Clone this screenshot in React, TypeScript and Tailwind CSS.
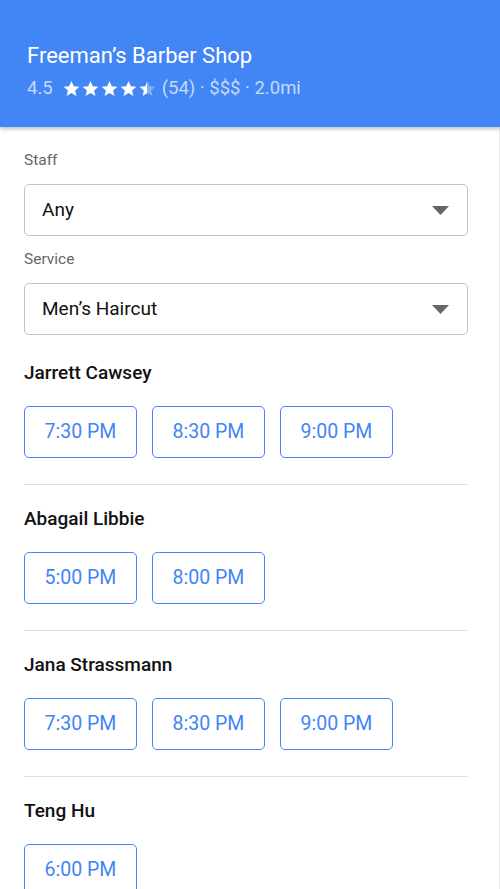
import React from "react";

const Star = ({ half = false }: { half?: boolean }) => (
  <svg width="19" height="19" viewBox="0 0 24 24">
    <defs>
      <linearGradient id="halfg">
        <stop offset="50%" stopColor="#ffffff" />
        <stop offset="50%" stopColor="rgba(255,255,255,0.35)" />
      </linearGradient>
    </defs>
    <path
      d="M12 2.5l2.9 6.6 7.1.6-5.4 4.7 1.6 7-6.2-3.7-6.2 3.7 1.6-7L2 9.7l7.1-.6z"
      fill={half ? "url(#halfg)" : "#ffffff"}
    />
  </svg>
);

const Select = ({ value }: { value: string }) => (
  <div className="h-[52px] border border-[#c4c4c4] rounded-[5px] flex items-center justify-between pl-[17px] pr-[18px]">
    <span className="text-[19px] text-[#111]">{value}</span>
    <svg width="17" height="9" viewBox="0 0 17 9">
      <path d="M0 0h17L8.5 9z" fill="#666" />
    </svg>
  </div>
);

const Section = ({ name, times, last = false }: { name: string; times: string[]; last?: boolean }) => (
  <div>
    <div className="text-[19px] leading-[24px] font-medium text-[#111]">{name}</div>
    <div className="flex gap-[15px] mt-[21px]">
      {times.map((t) => (
        <div
          key={t}
          className="w-[113px] h-[52px] border-[1.5px] border-[#4285f4] rounded-[5px] flex items-center justify-center text-[19.5px] text-[#4285f4]"
        >
          {t}
        </div>
      ))}
    </div>
    {!last && <div className="h-px bg-[#e0e0e0] mt-[26px] mb-[22px]" />}
  </div>
);

export default function App() {
  return (
    <div className="w-[500px] h-[889px] overflow-hidden bg-white relative" style={{ fontFamily: "Roboto, 'Liberation Sans', sans-serif" }}>
      <div className="h-[127px] bg-[#4285f4] pl-[27px] pt-[42px] shadow-[0_2px_4px_rgba(0,0,0,0.25)] relative z-10">
        <div className="text-[22px] leading-[28px] text-white">Freeman’s Barber Shop</div>
        <div className="mt-[6px] flex items-center text-[18.5px] leading-[24px] text-white/70">
          <span>4.5</span>
          <span className="flex items-center ml-[9px] mr-[5px]">
            <Star />
            <Star />
            <Star />
            <Star />
            <Star half />
          </span>
          <span>(54) · $$$ · 2.0mi</span>
        </div>
      </div>
      <div className="absolute right-0 top-[127px] bottom-0 w-px bg-[#e6e6e6]" />
      <div className="px-[24px] pt-[23px] pr-[32px]">
        <div className="text-[15.5px] leading-[20px] text-[#666]">Staff</div>
        <div className="mt-[14px]">
          <Select value="Any" />
        </div>
        <div className="text-[15.5px] leading-[20px] text-[#666] mt-[13px]">Service</div>
        <div className="mt-[14px]">
          <Select value="Men’s Haircut" />
        </div>
        <div className="mt-[26px]">
          <Section name="Jarrett Cawsey" times={["7:30 PM", "8:30 PM", "9:00 PM"]} />
          <Section name="Abagail Libbie" times={["5:00 PM", "8:00 PM"]} />
          <Section name="Jana Strassmann" times={["7:30 PM", "8:30 PM", "9:00 PM"]} />
          <Section name="Teng Hu" times={["6:00 PM"]} last />
        </div>
      </div>
    </div>
  );
}
